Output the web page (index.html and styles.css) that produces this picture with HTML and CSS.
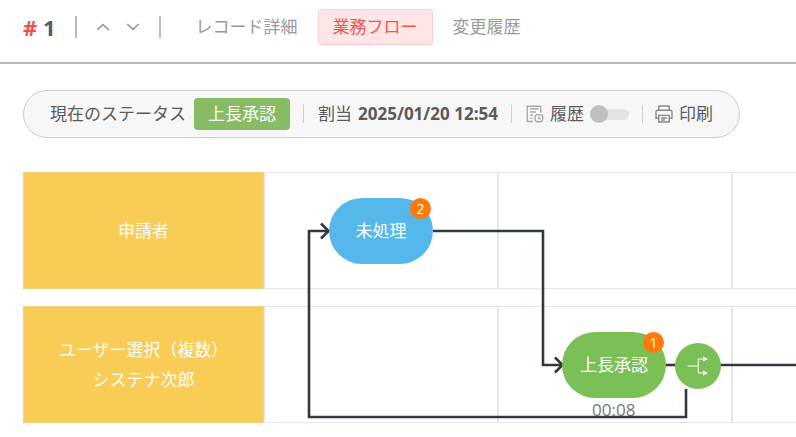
FILE: index.html
```html
<!DOCTYPE html>
<html lang="ja">
<head>
  <meta charset="UTF-8">
  <title>業務フロー</title>
  <link rel="stylesheet" href="styles.css">
</head>
<body>
  <header class="header">
    <h1 class="record-id"><span class="hash">#</span> 1</h1>
    <div class="pager">
      <button type="button" class="pager-btn" aria-label="前のレコード">
        <svg width="14" height="8" viewBox="0 0 14 8"><path d="M1.2 7 L7 1.6 L12.8 7"/></svg>
      </button>
      <button type="button" class="pager-btn" aria-label="次のレコード">
        <svg width="14" height="8" viewBox="0 0 14 8"><path d="M1.2 1 L7 6.4 L12.8 1"/></svg>
      </button>
    </div>
    <nav class="tabs">
      <a href="#detail" class="tab">レコード詳細</a>
      <a href="#flow" class="tab active">業務フロー</a>
      <a href="#log" class="tab">変更履歴</a>
    </nav>
  </header>

  <main class="main">
    <div class="status-bar">
      <div class="status-item">
        <span>現在のステータス</span>
        <span class="status-label">上長承認</span>
      </div>
      <div class="status-item">
        <span>割当</span>
        <strong>2025/01/20 12:54</strong>
      </div>
      <div class="status-item">
        <svg class="icon icon-light" width="18" height="18" viewBox="0 0 18 18">
          <path d="M7 16.5H1.2V1.2h13.6V7.5"/>
          <path d="M4 3.8h8.5M4 7h6M4 10.2h3M4 13.4h2.5"/>
          <rect x="9" y="9.6" width="7.8" height="7.2" rx="3"/>
          <path d="M12.8 11.4v2.2h2"/>
        </svg>
        <label for="history">履歴</label>
        <input type="checkbox" id="history" class="toggle">
      </div>
      <div class="status-item">
        <button type="button" class="print-btn">
          <svg class="icon" width="18" height="18" viewBox="0 0 18 18">
            <path d="M3.8 5V1h10.4v4"/>
            <path d="M3.8 13.2H1V7q0-1.8 1.8-1.8h12.4q1.8 0 1.8 1.8v6.2h-2.8"/>
            <path d="M3.8 10.4h10.4v6.6H3.8z"/>
            <path d="M6.2 13h5.6M6.2 15h3.6"/>
          </svg>
          印刷
        </button>
      </div>
    </div>

    <div class="flow">
      <div class="lane">
        <div class="lane-name">申請者</div>
        <div class="cell"></div>
        <div class="cell"></div>
        <div class="cell"></div>
      </div>
      <div class="lane">
        <div class="lane-name">ユーザー選択（複数）<br>システナ次郎</div>
        <div class="cell"></div>
        <div class="cell"></div>
        <div class="cell"></div>
      </div>

      <span class="time">00:08</span>

      <!-- connectors -->
      <svg class="lines" width="942" height="252" viewBox="0 0 942 252">
        <path d="M410 59H520V193H538"/>
        <path d="M643 193H652"/>
        <path d="M697 193H942"/>
        <path d="M663 217V245H286V59H305"/>
        <path d="M298 51.5L305.5 59L298 66.5"/>
        <path d="M532 185.5L539.5 193L532 200.5"/>
      </svg>

      <button type="button" class="node node-start">未処理<span class="badge">2</span></button>
      <button type="button" class="node node-approve">上長承認<span class="badge">1</span></button>
      <button type="button" class="branch" aria-label="分岐">
        <svg width="22" height="20" viewBox="0 0 22 20">
          <path d="M.5 10H11M17 3H11.2V17H17"/>
          <path class="head" d="M16 .5L21 3L16 5.5zM16 14.5L21 17L16 19.5z"/>
        </svg>
      </button>
    </div>
  </main>
</body>
</html>
```
FILE: styles.css
```css
* {
  box-sizing: border-box;
}
body {
  margin: 0;
  background: #fff;
  color: #5a5a5a;
  font-family: "Open Sans", "Noto Sans CJK JP", sans-serif;
  font-size: 17px;
  line-height: 24px;
}
button {
  padding: 0;
  border: 0;
  background: none;
  color: inherit;
  font: inherit;
  cursor: pointer;
}
svg {
  display: block;
  fill: none;
  stroke: currentColor;
}

/* header */
.header {
  display: flex;
  align-items: center;
  height: 64px;
  padding: 0 23px 8px;
  border-bottom: 2px solid #bbb;
}
.record-id {
  margin: 0;
  font-size: 22px;
  font-weight: 700;
}
.hash {
  color: #f0524d;
}
.pager {
  display: flex;
  align-items: center;
  gap: 16px;
  height: 22px;
  margin-left: 19px;
  padding: 0 19px;
  border-left: 2px solid #bbb;
  border-right: 2px solid #bbb;
}
.pager-btn {
  color: #999;
}
.pager-btn svg {
  stroke-width: 1.7;
}
.tabs {
  display: flex;
  gap: 5px;
  margin-left: 20px;
}
.tab {
  padding: 5px 14px;
  border: 1px solid transparent;
  border-radius: 3px;
  color: #999;
  text-decoration: none;
  white-space: nowrap;
}
.tab.active {
  border-color: #ffcfcf;
  background: #ffe5e5;
  color: #f0524d;
}

/* status bar */
.main {
  padding: 26px 0 0 23px;
}
.status-bar {
  display: flex;
  align-items: center;
  width: fit-content;
  height: 48px;
  padding: 0 26px;
  border: 1px solid #ccc;
  border-radius: 24px;
  background: #f7f7f7;
  white-space: nowrap;
}
.status-item {
  display: flex;
  align-items: center;
  gap: 6px;
}
.status-item + .status-item::before {
  content: "";
  width: 1px;
  height: 18px;
  margin: 0 8px 0 13px;
  background: #ccc;
}
.status-item:last-child::before {
  margin-right: 6px;
}
.status-label {
  margin-left: 2px;
  padding: 4px 14px;
  border-radius: 4px;
  background: #87bc64;
  color: #fff;
}
.icon {
  color: #888;
  stroke-width: 1.4;
}
.icon-light {
  color: #aaa;
}
.toggle {
  display: grid;
  align-items: center;
  width: 39px;
  height: 18px;
  margin: 0;
  appearance: none;
}
.toggle::before,
.toggle::after {
  content: "";
  grid-area: 1 / 1;
}
.toggle::before {
  height: 11px;
  border-radius: 6px;
  background: #e3e3e3;
}
.toggle::after {
  width: 18px;
  height: 18px;
  border-radius: 50%;
  background: #bfbfbf;
}
.print-btn {
  display: flex;
  align-items: center;
  gap: 6px;
}

/* flow chart */
.flow {
  position: relative;
  display: grid;
  gap: 17px;
  margin-top: 34px;
  overflow: hidden;
}
.lane {
  display: grid;
  grid-template-columns: 241px repeat(3, 234px);
  height: 117px;
}
.lane-name {
  display: flex;
  align-items: center;
  justify-content: center;
  border: 1px solid #f5d27c;
  background: #f9cc55;
  color: #fff;
  line-height: 30px;
  text-align: center;
}
.cell {
  border: 1px solid #e6e6e6;
}
.lines,
.node,
.branch,
.badge,
.time {
  position: absolute;
}
.lines {
  top: 0;
  left: 0;
  color: #30393e;
  stroke-width: 2.6;
}
.node {
  width: 104px;
  height: 66px;
  border-radius: 33px;
  color: #fff;
}
.node-start {
  top: 26px;
  left: 306px;
  background: #55b7ea;
}
.node-approve {
  top: 160px;
  left: 539px;
  background: #7bc057;
}
.badge {
  top: 0;
  right: 2px;
  width: 21px;
  height: 21px;
  border-radius: 50%;
  background: #ff7a0a;
  font-size: 14px;
  line-height: 22px;
}
.branch {
  top: 171px;
  left: 652px;
  display: grid;
  place-items: center;
  width: 46px;
  height: 46px;
  border-radius: 50%;
  background: #7bc057;
  color: #fff;
}
.branch .head {
  fill: currentColor;
  stroke: none;
}
.time {
  top: 226px;
  left: 569px;
  color: #777;
}
```
